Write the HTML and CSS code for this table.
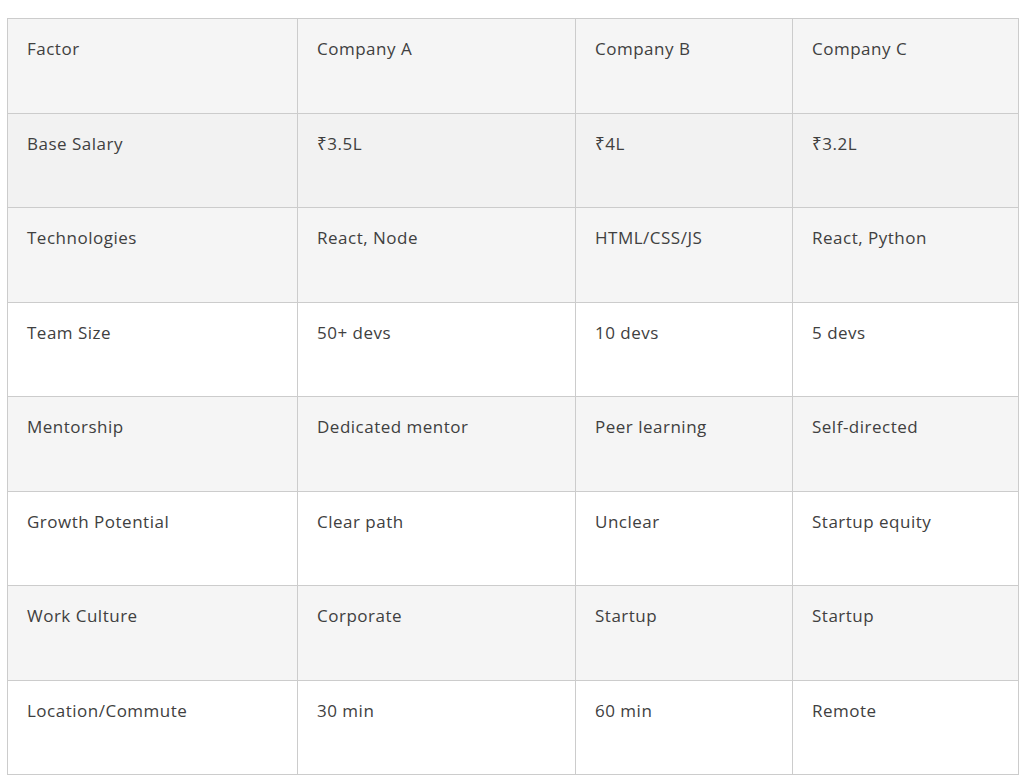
FILE: index.html
```html
<!DOCTYPE html>
<html>
<head>
<meta charset="utf-8">
<link rel="stylesheet" href="styles.css">
</head>
<body>
<table class="cmp">
  <colgroup>
    <col class="c1"><col class="c2"><col class="c3"><col class="c4">
  </colgroup>
  <thead>
    <tr><th>Factor</th><th>Company A</th><th>Company B</th><th>Company C</th></tr>
  </thead>
  <tbody>
    <tr class="hover"><td>Base Salary</td><td>₹3.5L</td><td>₹4L</td><td>₹3.2L</td></tr>
    <tr><td>Technologies</td><td>React, Node</td><td>HTML/CSS/JS</td><td>React, Python</td></tr>
    <tr><td>Team Size</td><td>50+ devs</td><td>10 devs</td><td>5 devs</td></tr>
    <tr><td>Mentorship</td><td>Dedicated mentor</td><td>Peer learning</td><td>Self-directed</td></tr>
    <tr><td>Growth Potential</td><td>Clear path</td><td>Unclear</td><td>Startup equity</td></tr>
    <tr><td>Work Culture</td><td>Corporate</td><td>Startup</td><td>Startup</td></tr>
    <tr><td>Location/Commute</td><td>30 min</td><td>60 min</td><td>Remote</td></tr>
  </tbody>
</table>
</body>
</html>
```
FILE: styles.css
```css
html, body {
  margin: 0;
  padding: 0;
  background: #ffffff;
}
body {
  padding: 18px 0 0 7px;
  font-family: "Open Sans", "Noto Sans", sans-serif;
  color: #404040;
}
.cmp {
  border-collapse: collapse;
  width: 1011px;
  table-layout: fixed;
}
.c1 { width: 290px; }
.c2 { width: 278px; }
.c3 { width: 217px; }
.c4 { width: 226px; }
.cmp th, .cmp td {
  border: 1px solid #cccccc;
  text-align: left;
  vertical-align: top;
  font-weight: 400;
  font-size: 17px;
  letter-spacing: 0.5px;
  line-height: 24px;
  padding: 18px 19px 22px;
  height: 53.5px;
}
.cmp thead tr { background: #f5f5f5; }
.cmp tbody tr:nth-child(even) { background: #f5f5f5; }
.cmp tbody tr.hover { background: #f2f2f2; }
```
